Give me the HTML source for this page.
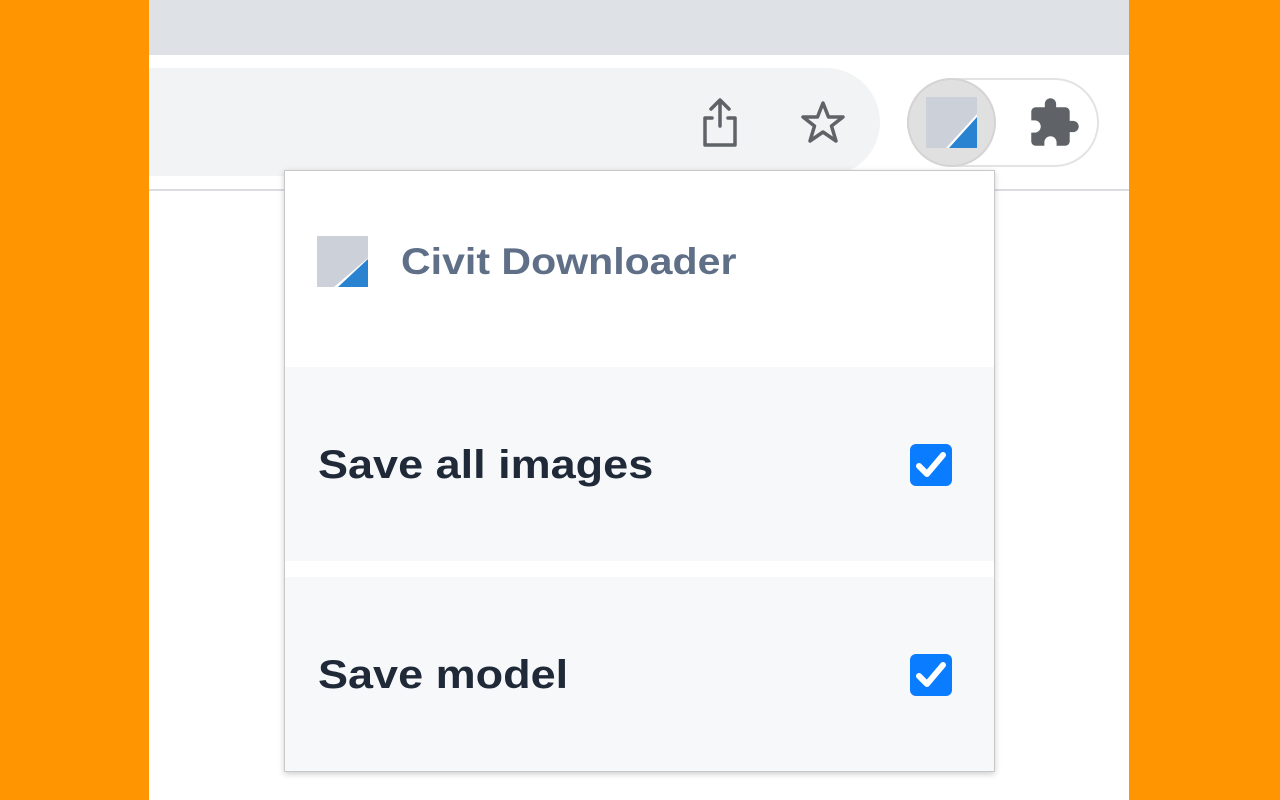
<!DOCTYPE html>
<html><head><style>
*{margin:0;padding:0;box-sizing:border-box}
body{width:1280px;height:800px;background:#ff9500;position:relative;overflow:hidden;font-family:"Liberation Sans",Arial,sans-serif}
.win{position:absolute;left:149px;top:0;width:980px;height:800px;background:#fff;overflow:hidden}
.tabs{position:absolute;left:0;top:0;width:980px;height:55px;background:#dee1e6}
.omni{position:absolute;left:-60px;top:68px;width:791px;height:108px;background:#f1f3f4;border-radius:54px}
.line{position:absolute;left:0;top:189px;width:980px;height:2px;background:#dadce0}
.ext{position:absolute;left:758px;top:78px;width:192px;height:89px;border:2px solid #e2e3e5;border-radius:45px;background:#fff}
.extc{position:absolute;left:758px;top:78px;width:89px;height:89px;border-radius:50%;background:#e0e0e0;border:2px solid #d4d4d4}
.pop{position:absolute;left:284px;top:170px;width:711px;height:602px;background:#fff;border:1px solid #c8c8c8;box-shadow:0 2px 6px rgba(0,0,0,.2)}
.row{position:absolute;left:0;width:709px;height:194px;background:#f7f8fa}
.lbl{position:absolute;left:33px;font-weight:bold;font-size:40px;color:#1f2937;transform:scaleX(1.125);transform-origin:0 0;white-space:nowrap}
.cb{position:absolute;left:625px;width:42px;height:42px;background:#0a7cff;border-radius:6px}
</style></head><body>
<div class="win">
<div class="tabs"></div>
<div class="omni"></div>
<div class="line"></div>
<svg style="position:absolute;left:548px;top:96px" width="46" height="54" viewBox="0 0 46 54"><path d="M23 4V30M14 13L23 4L32 13M15 22H8V49H38V22H31" fill="none" stroke="#5f6368" stroke-width="3.5" stroke-linejoin="round" stroke-linecap="round"/></svg>
<svg style="position:absolute;left:650px;top:100px" width="48" height="46" viewBox="0 0 48 46"><path d="M24 3L29.5 17H44L32.5 26L37 41L24 32L11 41L15.5 26L4 17H18.5Z" fill="none" stroke="#5f6368" stroke-width="3.5" stroke-linejoin="round"/></svg>
<div class="ext"></div>
<div class="extc"></div>
<svg style="position:absolute;left:775px;top:95px" width="54" height="54" viewBox="0 0 54 54"><polygon points="2,2 53,2 53,23 26,53 2,53" fill="#ccd1d9"/><polygon points="22,53 53,53 53,19" fill="#fff"/><polygon points="25,53 53,53 53,22" fill="#2a83d0"/></svg>
<svg style="position:absolute;left:880px;top:96px" width="52" height="52" viewBox="1 0 23 23"><path d="M20.5 11H19V7c0-1.1-.9-2-2-2h-4V3.5C13 2.12 11.88 1 10.5 1S8 2.12 8 3.5V5H4c-1.1 0-1.99.9-1.99 2v3.8H3.5c1.49 0 2.7 1.21 2.7 2.7s-1.21 2.7-2.7 2.7H2V20c0 1.1.9 2 2 2h3.8v-1.5c0-1.490 1.21-2.7 2.7-2.7 1.49 0 2.7 1.21 2.7 2.7V22H17c1.1 0 2-.9 2-2v-4h1.5c1.38 0 2.5-1.12 2.5-2.5S21.88 11 20.5 11z" fill="#5f6368"/></svg>
</div>
<div class="pop">
<svg style="position:absolute;left:32px;top:65px" width="52" height="52" viewBox="0 0 52 52"><polygon points="0,0 51,0 51,22 17,51 0,51" fill="#ccd1d9"/><polygon points="21,51 51,51 51,23" fill="#2a83d0"/></svg>
<div style="position:absolute;left:116px;top:70px;font-size:37px;font-weight:bold;color:#5f6f87;transform:scaleX(1.11);transform-origin:0 0;white-space:nowrap">Civit Downloader</div>
<div class="row" style="top:196px"><div class="lbl" style="top:76px">Save all images</div><div class="cb" style="top:77px"><svg width="42" height="42" viewBox="0 0 42 42"><path d="M9 22L17 30L33 11" fill="none" stroke="#fff" stroke-width="6" stroke-linecap="round" stroke-linejoin="round"/></svg></div></div>
<div class="row" style="top:406px"><div class="lbl" style="top:76px">Save model</div><div class="cb" style="top:77px"><svg width="42" height="42" viewBox="0 0 42 42"><path d="M9 22L17 30L33 11" fill="none" stroke="#fff" stroke-width="6" stroke-linecap="round" stroke-linejoin="round"/></svg></div></div>
</div>
</body></html>
